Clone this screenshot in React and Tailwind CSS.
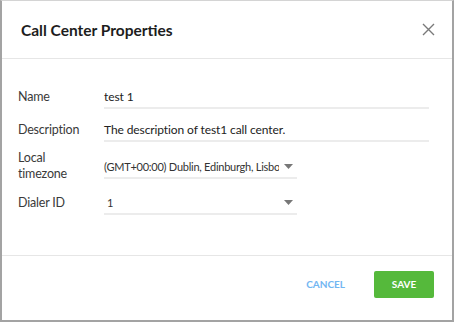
export default function App() {
    const font = { fontFamily: 'Lato, "Noto Sans", sans-serif' }

    return (
        <div className="w-[454px] h-[322px] bg-white overflow-hidden" style={font}>
            <div className="h-full flex flex-col border-t border-t-[#d4d4d4] border-x-2 border-b-2 border-x-[#a3a3a3] border-b-[#a3a3a3]">
                <div className="h-[58px] flex items-center justify-between pl-[19px] pr-[17px] pt-[2px] border-b border-[#e6e6e6] shrink-0">
                    <h2 className="text-[15.5px] font-bold text-[#1d1d1d]">Call Center Properties</h2>
                    <svg width="13" height="13" viewBox="0 0 13 13" className="text-[#7a7a7a] -mt-[2px]">
                        <path d="M1 1L12 12M12 1L1 12" stroke="currentColor" strokeWidth="1.4" />
                    </svg>
                </div>

                <div className="flex-1 pt-[17px] pl-[16px] pr-[22px]">
                    <Field label="Name" h="h-[33px]" wide>
                        <span className="text-[12px] leading-[16px] tracking-[-0.1px] text-[#222]">test 1</span>
                    </Field>
                    <Field label="Description" h="h-[33px]" wide>
                        <span className="text-[12px] leading-[16px] tracking-[-0.1px] text-[#222]">The description of test1 call center.</span>
                    </Field>
                    <Field label={<>Local<br />timezone</>} h="h-[37px]" select tall>
                        <span className="text-[11px] leading-[16px] tracking-[-0.25px] text-[#333] whitespace-nowrap overflow-hidden w-[175px] block">
                            (GMT+00:00) Dublin, Edinburgh, Lisbon, London
                        </span>
                    </Field>
                    <Field label="Dialer ID" h="h-[36px]" select>
                        <span className="text-[11px] leading-[16px] text-[#333] pl-[3px]">1</span>
                    </Field>
                </div>

                <div className="h-[65px] shrink-0 border-t border-[#e6e6e6] flex items-center justify-end gap-[29px] pr-[18px] pb-[8px]">
                    <button className="text-[10px] font-bold text-[#72b6f2]">CANCEL</button>
                    <button className="w-[60px] h-[27px] rounded-[2px] bg-[#55b93b] text-white text-[10px] font-bold">SAVE</button>
                </div>
            </div>
        </div>
    )
}

function Field({ label, children, wide, select, tall, h }) {
    return (
        <div className={`flex items-end ${h}`}>
            <div className={`w-[86px] text-[12.5px] leading-[16px] tracking-[-0.2px] text-[#3a3a3a] ${tall ? '-mb-[3px]' : 'pb-[4px]'}`}>
                {label}
            </div>
            <div className={`h-full flex items-end justify-between border-b-2 border-[#ececec] pb-[2px] ${wide ? 'w-[325px]' : 'w-[193px] pr-[4px]'}`}>
                {children}
                {select && (
                    <svg width="9" height="5" viewBox="0 0 9 5" className="text-[#777] shrink-0 mb-[6px]">
                        <path d="M0 0H9L4.5 5Z" fill="currentColor" />
                    </svg>
                )}
            </div>
        </div>
    )
}
